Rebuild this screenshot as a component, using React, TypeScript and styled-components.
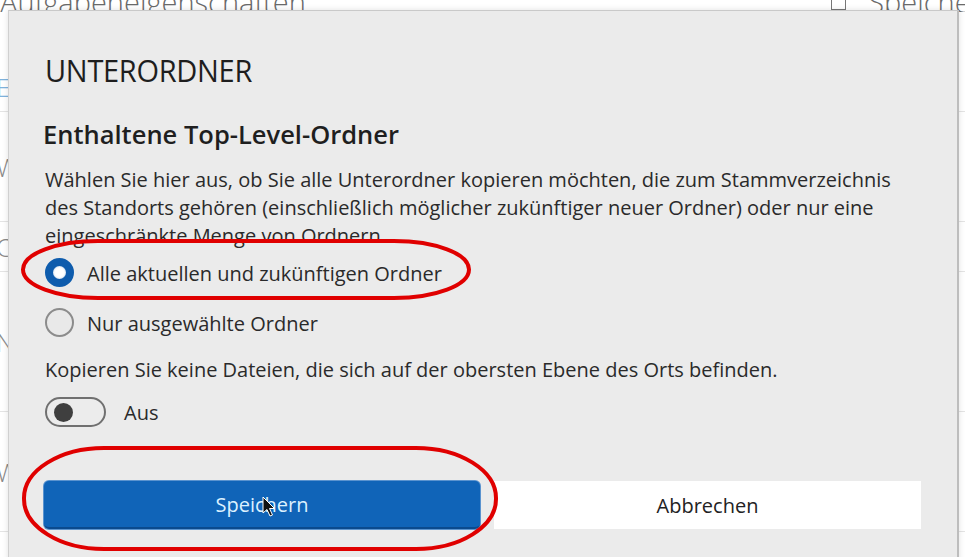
import React from "react";
import styled, { createGlobalStyle } from "styled-components";

const Global = createGlobalStyle`
  html, body { margin: 0; padding: 0; background: #ffffff; }
  body { font-family: "Open Sans", "Noto Sans", sans-serif; }
  * { box-sizing: border-box; }
`;

const Page = styled.div`
  position: relative;
  width: 965px;
  height: 557px;
  overflow: hidden;
  background: #ffffff;
`;

const HeaderBar = styled.div`
  display: flex;
  align-items: flex-end;
  justify-content: space-between;
  height: 12px;
  overflow: hidden;
  color: #6a6a6a;
  font-size: 29px;
  font-weight: 300;
  line-height: 1;
`;

const HeaderTitle = styled.div`
  margin-bottom: -4px;
  white-space: nowrap;
`;

const HeaderAction = styled.div`
  display: flex;
  align-items: flex-end;
  gap: 22px;
  margin-right: -34px;
  margin-bottom: -4px;
  white-space: nowrap;
`;

const SaveIcon = styled.span`
  width: 15px;
  height: 16px;
  border: 1.5px solid #777;
  margin-bottom: 6px;
`;

const Body = styled.div`
  display: flex;
  flex-direction: column;
  padding-top: 50px;
  margin-left: -4px;
`;

const BodyRow = styled.div<{ $h: number; $color?: string }>`
  height: ${(p) => p.$h}px;
  display: flex;
  align-items: center;
  border-bottom: 1px solid #e4e4e4;
  font-size: 26px;
  color: ${(p) => p.$color || "#8a8a8a"};
  font-weight: 300;
`;

const Dialog = styled.div`
  position: absolute;
  left: 8px;
  top: 10px;
  width: 951px;
  height: 600px;
  background: #ebebeb;
  border-top: 1px solid #c9c9c9;
  border-left: 1px solid #d0d0d0;
  border-right: 2px solid #bdbdbd;
  box-shadow: 0 0 6px rgba(0, 0, 0, 0.12);
  padding: 42px 36px 0 36px;
  display: flex;
  flex-direction: column;
  color: #242424;
`;

const Title = styled.h1`
  margin: 0;
  font-size: 29px;
  line-height: 34px;
  font-weight: 400;
  letter-spacing: -0.3px;
  color: #1e1e1e;
  transform: scaleY(1.06);
  transform-origin: left center;
`;

const Heading = styled.h2`
  margin: 31px 0 0 -2px;
  font-size: 25.5px;
  line-height: 32px;
  font-weight: 600;
  color: #1f1f1f;
`;

const Paragraph = styled.p`
  margin: 16px 0 0 0;
  font-size: 20px;
  line-height: 28px;
  max-width: 870px;
  color: #2a2a2a;
`;

const RadioGroup = styled.div`
  display: flex;
  flex-direction: column;
  gap: 10px;
  margin-top: 3px;
`;

const RadioRow = styled.label`
  display: flex;
  align-items: center;
  gap: 13px;
  height: 40px;
  font-size: 20px;
  line-height: 28px;
  color: #2a2a2a;
  padding-top: 2px;
`;

const RadioCircle = styled.span<{ $checked?: boolean }>`
  width: 29px;
  height: 29px;
  border-radius: 50%;
  flex: none;
  margin-top: -3px;
  ${(p) =>
    p.$checked
      ? `background: #ffffff; border: 8px solid #0e5cad; box-shadow: inset 0 0 2px rgba(14,92,173,0.4);`
      : `background: #e9e9e9; border: 2px solid #8c8c8c;`}
`;

const Note = styled.p`
  margin: 13px 0 0 0;
  font-size: 20px;
  line-height: 28px;
  color: #2a2a2a;
`;

const ToggleRow = styled.div`
  display: flex;
  align-items: center;
  gap: 18px;
  margin-top: 13px;
  height: 30px;
  font-size: 20px;
  color: #2a2a2a;
`;

const Toggle = styled.span`
  width: 61px;
  height: 30px;
  border-radius: 15px;
  border: 2px solid #707070;
  background: #ececec;
  display: flex;
  align-items: center;
  padding-left: 7px;
`;

const Knob = styled.span`
  width: 19px;
  height: 19px;
  border-radius: 50%;
  background: #3f3f3f;
`;

const ButtonRow = styled.div`
  display: grid;
  grid-template-columns: 436px 427px;
  gap: 14px;
  margin-top: 54px;
  margin-left: -1px;
`;

const Button = styled.button<{ $primary?: boolean }>`
  height: 48px;
  border: none;
  font-family: "Open Sans", "Noto Sans", sans-serif;
  font-size: 20px;
  display: flex;
  align-items: center;
  justify-content: center;
  ${(p) =>
    p.$primary
      ? `background: #1064b8; color: #dcf1ff; border-radius: 5px; border-bottom: 2px solid #0a4a8e; box-shadow: 0 0 0 1px #5a93cf;`
      : `background: #ffffff; color: #222222; border-radius: 0;`}
`;

const Overlay = styled.svg`
  position: absolute;
  left: 0;
  top: 0;
  pointer-events: none;
`;

export default function App() {
  return (
    <>
      <Global />
      <Page>
        <HeaderBar>
          <HeaderTitle>Aufgabeneigenschaften</HeaderTitle>
          <HeaderAction>
            <SaveIcon />
            <span>Speichern</span>
          </HeaderAction>
        </HeaderBar>
        <Body>
          <BodyRow $h={50} $color="#7fb3dd">Einstellungen</BodyRow>
          <BodyRow $h={110}>Wochentage</BodyRow>
          <BodyRow $h={50}>Optionen</BodyRow>
          <BodyRow $h={140}>Name</BodyRow>
          <BodyRow $h={120}>Wo gespeichert</BodyRow>
        </Body>

        <Dialog>
          <Title>UNTERORDNER</Title>
          <Heading>Enthaltene Top-Level-Ordner</Heading>
          <Paragraph>
            Wählen Sie hier aus, ob Sie alle Unterordner kopieren möchten, die zum Stammverzeichnis
            des Standorts gehören (einschließlich möglicher zukünftiger neuer Ordner) oder nur eine
            eingeschränkte Menge von Ordnern.
          </Paragraph>
          <RadioGroup>
            <RadioRow>
              <RadioCircle $checked />
              Alle aktuellen und zukünftigen Ordner
            </RadioRow>
            <RadioRow>
              <RadioCircle />
              Nur ausgewählte Ordner
            </RadioRow>
          </RadioGroup>
          <Note>Kopieren Sie keine Dateien, die sich auf der obersten Ebene des Orts befinden.</Note>
          <ToggleRow>
            <Toggle>
              <Knob />
            </Toggle>
            Aus
          </ToggleRow>
          <ButtonRow>
            <Button $primary>Speichern</Button>
            <Button>Abbrechen</Button>
          </ButtonRow>
        </Dialog>

        <Overlay width="965" height="557" viewBox="0 0 965 557">
          <rect x="23" y="241" width="446" height="57" rx="75" ry="28.5" fill="none" stroke="#e00000" strokeWidth="4" />
          <rect x="24" y="448" width="472" height="101" rx="80" ry="50" fill="none" stroke="#e00000" strokeWidth="4" />
          <path
            d="M263 497 L263 513 L267 509.5 L270 516 L272.5 515 L269.5 508.5 L274.5 508.5 Z"
            fill="#111"
            stroke="#fff"
            strokeWidth="1"
            strokeLinejoin="round"
          />
        </Overlay>
      </Page>
    </>
  );
}
